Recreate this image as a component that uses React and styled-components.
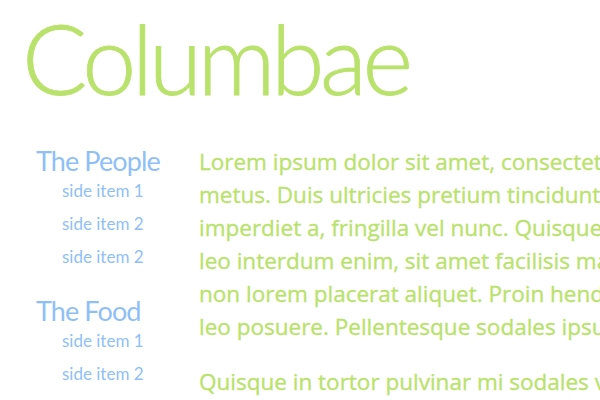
import React from "react";
import styled, { createGlobalStyle } from "styled-components";

const Global = createGlobalStyle`
  html, body { margin: 0; padding: 0; background: #ffffff; overflow: hidden; }
  body { width: 600px; height: 400px; }
`;

const Page = styled.div`
  width: 1000px;
  padding: 0 0 0 22px;
`;

const Title = styled.h1`
  margin: 0;
  height: 128px;
  font-family: "Lato", sans-serif;
  font-weight: 300;
  font-size: 97px;
  line-height: 116px;
  color: #b9e26c;
  letter-spacing: -4.5px;
  -webkit-text-stroke: 0.8px #b9e26c;
`;

const Columns = styled.div`
  display: flex;
  align-items: flex-start;
`;

const Side = styled.nav`
  width: 177px;
  flex: none;
  padding: 20px 0 0 14px;
  box-sizing: border-box;
`;

const Group = styled.div`
  margin-bottom: 25px;
`;

const GroupTitle = styled.div`
  font-family: "Lato", sans-serif;
  font-size: 27px;
  line-height: 26px;
  letter-spacing: -0.9px;
  color: #8fbff7;
`;

const Item = styled.div`
  font-family: "Lato", sans-serif;
  font-size: 17px;
  line-height: 33px;
  color: #8fbff7;
  padding-left: 26px;
`;

const Main = styled.main`
  flex: none;
  width: 800px;
  padding-top: 17px;
`;

const Para = styled.p`
  margin: 0 0 22px;
  font-family: "Open Sans", sans-serif;
  font-weight: 400;
  font-size: 22.5px;
  line-height: 33px;
  color: #b9e26c;
  -webkit-text-stroke: 0.35px #b9e26c;
  white-space: nowrap;
`;

const groups = [
  { title: "The People", items: ["side item 1", "side item 2", "side item 2"] },
  { title: "The Food", items: ["side item 1", "side item 2", "side item 2"] },
];

export default function App() {
  return (
    <>
      <Global />
      <Page>
        <Title>Columbae</Title>
        <Columns>
          <Side>
            {groups.map((g) => (
              <Group key={g.title}>
                <GroupTitle>{g.title}</GroupTitle>
                {g.items.map((it, i) => (
                  <Item key={i}>{it}</Item>
                ))}
              </Group>
            ))}
          </Side>
          <Main>
            <Para>
              Lorem ipsum dolor sit amet, consectetur adipiscing elit. Nulla at
              <br />
              metus. Duis ultricies pretium tincidunt. Vivamus arcu nisl,
              <br />
              imperdiet a, fringilla vel nunc. Quisque eget est et nunc
              <br />
              leo interdum enim, sit amet facilisis magna erat at lacus.
              <br />
              non lorem placerat aliquet. Proin hendrerit nulla nec
              <br />
              leo posuere. Pellentesque sodales ipsum in tellus.
            </Para>
            <Para>
              Quisque in tortor pulvinar mi sodales vehicula non sed dolor.
            </Para>
          </Main>
        </Columns>
      </Page>
    </>
  );
}
